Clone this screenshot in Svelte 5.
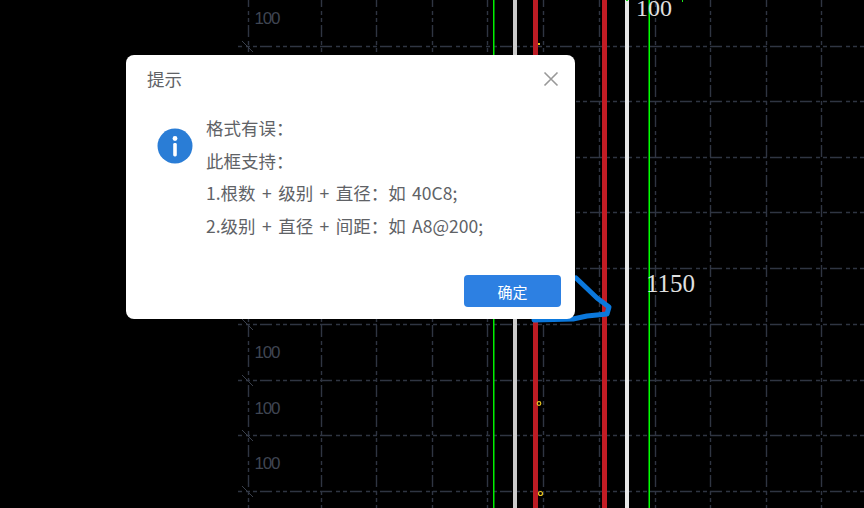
<script>
    const rows = [46, 101, 157, 212, 268, 324, 380, 435, 491];
    const cols = [321, 376, 432, 487, 543, 599, 655, 710, 766, 821];
    const dims = [18, 352, 408, 463];
    const lines = ["格式有误\uFF1A", "此框支持\uFF1A", "1.根数 + 级别 + 直径\uFF1A如 40C8;", "2.级别 + 直径 + 间距\uFF1A如 A8@200;"];
</script>

<main class="stage">
    <svg class="drawing" width="864" height="508" viewBox="0 0 864 508">
        <g class="grid">
            {#each rows as y}
                <line class="row" x1="238" y1={y + 0.5} x2="864" y2={y + 0.5} />
                <line class="tick" x1="242" y1={y - 5} x2="253" y2={y + 6} />
            {/each}
            <line class="col" x1="248.5" y1="0" x2="248.5" y2="508" />
            {#each cols as x}
                <line class="col" x1={x + 0.5} y1="0" x2={x + 0.5} y2="508" />
            {/each}
        </g>

        <rect x="493" y="0" width="1.5" height="508" fill="#00f000" />
        <rect x="648.5" y="0" width="1.5" height="508" fill="#00ff00" />
        <rect x="513" y="0" width="4" height="508" fill="#cccccc" />
        <rect x="625" y="0" width="4" height="508" fill="#e8e8e8" />
        <rect x="533" y="0" width="5" height="508" fill="#bc1c24" />
        <rect x="602" y="0" width="5" height="508" fill="#c21c24" />

        <path class="sketch" d="M576 278 L597 298 L609 307 L607 314 L587 316 L573 319 L534 320" />

        <circle class="node" cx="539" cy="403.5" r="1.8" />
        <circle class="node" cx="540.5" cy="493.5" r="2" />
        <rect x="538" y="43" width="2" height="2" fill="#e8c820" />
        <rect x="626" y="0" width="2" height="1" fill="#19e619" />
        <rect x="682" y="0" width="1" height="2" fill="#19e619" />

        {#each dims as y}
            <text class="dim" x="254.5" y={y + 6}>100</text>
        {/each}
        <text class="label" x="636" y="16">100</text>
        <text class="label wide" x="646" y="292">1150</text>
    </svg>

    <section class="dialog">
        <header class="head">
            <span class="title">提示</span>
            <svg class="close" width="16" height="16" viewBox="0 0 16 16">
                <path d="M1.5 1.5 L14.5 14.5 M14.5 1.5 L1.5 14.5" />
            </svg>
        </header>
        <div class="body">
            <svg class="info" width="36" height="36" viewBox="0 0 36 36">
                <circle cx="18" cy="18" r="17.5" fill="#2a7dd6" />
                <circle cx="18" cy="10.5" r="2.4" fill="#fff" />
                <rect x="16.2" y="15" width="3.6" height="13.5" rx="1.4" fill="#fff" />
            </svg>
            <div class="text">
                {#each lines as line}
                    <p>{line}</p>
                {/each}
            </div>
        </div>
        <footer class="foot">
            <button>确定</button>
        </footer>
    </section>
</main>

<style>
    :global(body) {
        margin: 0;
        background: #000;
    }
    .stage {
        position: relative;
        width: 864px;
        height: 508px;
        overflow: hidden;
        background: #000;
    }
    .drawing {
        display: block;
    }
    .grid line {
        stroke: #2f3542;
        stroke-width: 1.4;
        stroke-dasharray: 12 4 4 3 4 3;
    }
    .grid .row {
        stroke-dashoffset: 8;
    }
    .grid .col {
        stroke-dashoffset: 5;
    }
    .grid .tick {
        stroke: #3a404c;
        stroke-width: 1;
        stroke-dasharray: none;
    }
    .sketch {
        fill: none;
        stroke: #0b78dc;
        stroke-width: 5;
        stroke-linecap: round;
        stroke-linejoin: round;
    }
    .node {
        fill: none;
        stroke: #e8c420;
        stroke-width: 1.2;
    }
    .dim {
        font-family: "Liberation Sans", sans-serif;
        font-size: 17px;
        letter-spacing: -1.2px;
        fill: #3f4552;
    }
    .label {
        font-family: "Liberation Serif", serif;
        font-size: 24px;
        fill: #e0e0e0;
    }
    .label.wide {
        font-size: 25px;
    }
    .dialog {
        position: absolute;
        left: 126px;
        top: 55px;
        width: 449px;
        height: 264px;
        box-sizing: border-box;
        display: flex;
        flex-direction: column;
        background: #fff;
        border-radius: 8px;
        font-family: "Noto Sans CJK SC", "Liberation Sans", sans-serif;
        color: #606266;
    }
    .head {
        display: flex;
        align-items: center;
        justify-content: space-between;
        height: 48px;
        padding: 0 16px 0 21px;
    }
    .title {
        font-size: 17.5px;
        line-height: 48px;
    }
    .close path {
        fill: none;
        stroke: #999;
        stroke-width: 1.6;
    }
    .body {
        display: flex;
        gap: 13px;
        padding: 9px 0 0 31px;
    }
    .info {
        margin-top: 16px;
        flex: none;
    }
    .text p {
        margin: 0;
        font-size: 17.5px;
        line-height: 32.7px;
        word-spacing: 2.5px;
        white-space: nowrap;
    }
    .foot {
        margin-top: auto;
        display: flex;
        justify-content: flex-end;
        padding: 0 14px 12px 0;
    }
    button {
        width: 97px;
        height: 32px;
        border: none;
        border-radius: 4px;
        background: #2d80e2;
        color: #fff;
        font-family: inherit;
        font-size: 15px;
        padding: 0;
    }
</style>
